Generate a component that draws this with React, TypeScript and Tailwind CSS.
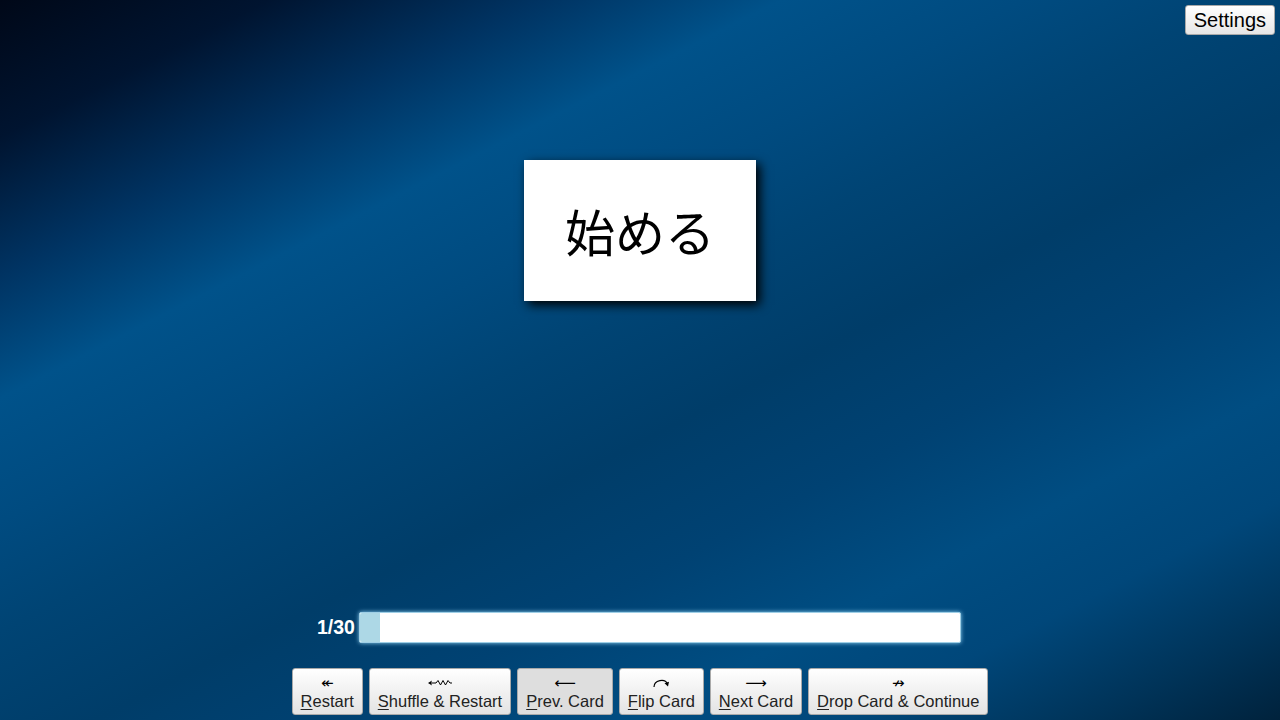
import React from "react";

const btnBase =
  "flex flex-col items-center rounded-[3px] border border-[#a9a9a9] px-[8px] pt-[5px] pb-[3px] text-[16.5px] text-[#222] font-['Liberation_Sans',Arial,sans-serif]";
const btnNormal = "bg-[linear-gradient(#ffffff,#e3e3e3)]";
const btnActive = "bg-[#dedede]";

function FlipIcon() {
  return (
    <svg width="18" height="12" viewBox="0 0 18 12" className="mt-[3px]">
      <path d="M2 10 C2 3 13 1 15.5 7" fill="none" stroke="#000" strokeWidth="1.2" />
      <path d="M12.5 6.2 L16 9.5 L17 4.8 Z" fill="#000" />
    </svg>
  );
}

function ShuffleIcon() {
  return (
    <svg width="26" height="10" viewBox="0 0 26 10" className="mt-[4px]">
      <path d="M1 5 L5 2.5 L4 5 L5 7.5 Z" fill="#000" />
      <path
        d="M3 5 L9 5 L11 2.5 L13.5 7 L16 2.5 L18.5 7 L21 2.5 L23 5 L25 5"
        fill="none"
        stroke="#000"
        strokeWidth="1"
      />
    </svg>
  );
}

function CtlButton({
  icon,
  first,
  rest,
  active,
}: {
  icon: React.ReactNode;
  first: string;
  rest: string;
  active?: boolean;
}) {
  return (
    <button className={`${btnBase} ${active ? btnActive : btnNormal}`}>
      <span className="flex h-[18px] items-start justify-center leading-[18px] text-[15px] text-black font-['DejaVu_Sans',sans-serif]">
        {icon}
      </span>
      <span className="h-[19px] leading-[19px] whitespace-nowrap">
        <u className="underline underline-offset-[2px]">{first}</u>
        {rest}
      </span>
    </button>
  );
}

export default function App() {
  return (
    <div className="relative flex h-[720px] w-full flex-col overflow-hidden bg-[linear-gradient(153deg,#000818_0%,#001430_10%,#003362_20%,#00528a_29%,#004b80_38%,#004474_46%,#003d69_56%,#004273_66%,#004d82_76%,#00477a_84%,#003358_93%,#00223c_100%)]">
      <div className="flex justify-end pt-[5px] pr-[5px]">
        <button className="h-[30px] rounded-[3px] border border-[#a9a9a9] bg-[linear-gradient(#ffffff,#e6e6e6)] px-[8px] text-[20px] leading-[28px] text-black font-['Liberation_Sans',Arial,sans-serif]">
          Settings
        </button>
      </div>

      <div className="mt-[125px] flex justify-center">
        <div className="flex h-[141px] w-[232px] items-center justify-center bg-white shadow-[4px_4px_10px_rgba(0,0,0,1)]">
          <span className="-mt-[2px] text-[50px] leading-none text-black font-['Noto_Sans_CJK_JP','Noto_Sans_CJK_SC',sans-serif]">
            始める
          </span>
        </div>
      </div>

      <div className="flex-1" />

      <div className="flex items-center justify-center gap-[4px] pr-[2px]">
        <span className="text-[19.5px] font-bold text-white font-['Liberation_Sans',Arial,sans-serif]">
          1/30
        </span>
        <div className="h-[31px] w-[602px] rounded-[2px] border border-[#9fcfe6] bg-white shadow-[0_0_4px_#8fd0f0]">
          <div className="h-full w-[20px] rounded-l-[2px] bg-[#add8e6]" />
        </div>
      </div>

      <div className="mt-[25px] mb-[5px] flex justify-center gap-[6px]">
        <CtlButton icon="↞" first="R" rest="estart" />
        <CtlButton icon={<ShuffleIcon />} first="S" rest="huffle & Restart" />
        <CtlButton icon="⟵" first="P" rest="rev. Card" active />
        <CtlButton icon={<FlipIcon />} first="F" rest="lip Card" />
        <CtlButton icon="⟶" first="N" rest="ext Card" />
        <CtlButton icon="↛" first="D" rest="rop Card & Continue" />
      </div>
    </div>
  );
}
